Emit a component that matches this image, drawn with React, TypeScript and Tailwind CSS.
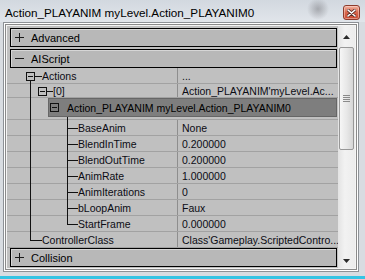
import React from "react";

const font = "font-['Liberation_Sans',Arial,sans-serif]";

function Expander({ open }: { open: boolean }) {
  return (
    <svg width="9" height="9" viewBox="0 0 9 9" shapeRendering="crispEdges" className="shrink-0">
      <line x1="0" y1="4.5" x2="9" y2="4.5" stroke="#1a1a1a" />
      {!open && <line x1="4.5" y1="0" x2="4.5" y2="9" stroke="#1a1a1a" />}
    </svg>
  );
}

function CategoryHeader({ label, open }: { label: string; open: boolean }) {
  return (
    <div className="ml-[3px] mr-[1px] flex h-[19px] shrink-0 items-center border border-black bg-[#b8b8b8] pl-[4px] shadow-[inset_1px_1px_0_#d6d6d6]">
      <Expander open={open} />
      <span className="ml-[7px] pt-[1px] text-[11px] leading-none text-black">{label}</span>
    </div>
  );
}

type Row = { name: string; value: string; indent: number; height: number };

const rows: Row[] = [
  { name: "Actions", value: "...", indent: 35, height: 16 },
  { name: "[0]", value: "Action_PLAYANIM'myLevel.Ac...", indent: 46, height: 14 },
];

const children: Row[] = [
  { name: "BaseAnim", value: "None", indent: 71, height: 16 },
  { name: "BlendInTime", value: "0.200000", indent: 71, height: 16 },
  { name: "BlendOutTime", value: "0.200000", indent: 71, height: 16 },
  { name: "AnimRate", value: "1.000000", indent: 71, height: 16 },
  { name: "AnimIterations", value: "0", indent: 71, height: 16 },
  { name: "bLoopAnim", value: "Faux", indent: 71, height: 16 },
  { name: "StartFrame", value: "0.000000", indent: 71, height: 16 },
  { name: "ControllerClass", value: "Class'Gameplay.ScriptedContro...", indent: 35, height: 16 },
];

function PropRow({ row }: { row: Row }) {
  return (
    <div
      className={`flex border-b border-[#a2a2a2] text-[10.5px] text-[#0c0c14] ${row.height === 14 ? "h-[14px] leading-[15px]" : "h-[16px] leading-[17px]"}`}
    >
      <div className="w-[171px] shrink-0 overflow-hidden whitespace-nowrap border-r border-[#8e8e8e]" style={{ paddingLeft: row.indent }}>
        {row.name}
      </div>
      <div className="flex-1 overflow-hidden whitespace-nowrap pl-[4px]">{row.value}</div>
    </div>
  );
}

function TreeLines() {
  const childYs = [60, 76, 92, 108, 124, 140, 156];
  return (
    <svg
      width="331"
      height="180"
      viewBox="0 0 331 180"
      shapeRendering="crispEdges"
      className="pointer-events-none absolute left-0 top-0"
    >
      {/* Actions */}
      <rect x="19.5" y="4.5" width="8" height="8" fill="none" stroke="#111" />
      <line x1="21" y1="8.5" x2="26" y2="8.5" stroke="#111" />
      <line x1="28" y1="8.5" x2="35" y2="8.5" stroke="#111" />
      <line x1="23.5" y1="13" x2="23.5" y2="172.5" stroke="#111" />
      <line x1="23" y1="172.5" x2="35" y2="172.5" stroke="#111" />
      {/* [0] */}
      <rect x="31.5" y="19.5" width="8" height="8" fill="none" stroke="#111" />
      <line x1="33" y1="23.5" x2="38" y2="23.5" stroke="#111" />
      <line x1="40" y1="23.5" x2="46" y2="23.5" stroke="#111" />
      {/* Action_PLAYANIM object */}
      <rect x="43.5" y="35.5" width="8" height="8" fill="none" stroke="#111" />
      <line x1="45" y1="39.5" x2="50" y2="39.5" stroke="#111" />
      <line x1="60.5" y1="49" x2="60.5" y2="156.5" stroke="#111" />
      {childYs.map((y) => (
        <line key={y} x1="60" y1={y + 0.5} x2="71" y2={y + 0.5} stroke="#111" />
      ))}
    </svg>
  );
}

function ScrollArrow({ up }: { up: boolean }) {
  return (
    <div className="flex h-[19px] items-center justify-center">
      <svg width="7" height="4" viewBox="0 0 7 4" className={up ? "mt-[2px]" : "mt-[4px]"}>
        <polygon points={up ? "3.5,0 7,4 0,4" : "0,0 7,0 3.5,4"} fill="#2a2a2a" />
      </svg>
    </div>
  );
}

export default function App() {
  return (
    <div className={`h-[279px] w-[365px] overflow-hidden bg-[#34c4e4] ${font}`}>
      <div className="flex h-[276px] flex-col bg-[#d8dce1]">
        {/* title bar */}
        <div className="flex h-[22px] shrink-0 items-start bg-[radial-gradient(circle_at_318px_9px,rgba(105,105,110,0.45)_0,rgba(105,105,110,0)_11px),linear-gradient(#d2d8df,#e1e5ea)] pl-[5px] pr-[5px]">
          <span className="flex-1 whitespace-nowrap pt-[5px] text-[11.7px] leading-[15px] text-black">
            Action_PLAYANIM myLevel.Action_PLAYANIM0
          </span>
          <div className="mt-[5px] flex h-[15px] w-[17px] items-center justify-center rounded-[3px] border border-[#8c3b2c] bg-[linear-gradient(#f2b4a2,#d8664c_50%,#c9472f)] shadow-[inset_0_0_0_1px_rgba(255,220,210,0.5)]">
            <svg width="9" height="8" viewBox="0 0 9 8">
              <path d="M1 1 L8 7 M8 1 L1 7" stroke="#5a2a22" strokeWidth="3" strokeLinecap="round" />
              <path d="M1 1 L8 7 M8 1 L1 7" stroke="#ffffff" strokeWidth="1.6" strokeLinecap="round" />
            </svg>
          </div>
        </div>

        {/* client area */}
        <div className="flex flex-1 pb-[4px] pl-[3px] pr-[6px]">
          <div className="flex flex-1 p-[4px] shadow-[inset_0_0_0_1px_#8d9196,inset_0_0_0_2px_#ffffff,inset_0_0_0_3px_#8a8a8a,inset_0_0_0_4px_#f4f4f4]">
            {/* property grid */}
            <div className="flex w-[331px] flex-col bg-[#c0c0c0]">
              <div className="h-[2px] shrink-0" />
              <CategoryHeader label="Advanced" open={false} />
              <div className="h-[2px] shrink-0" />
              <CategoryHeader label="AIScript" open={true} />

              <div className="relative h-[180px] shrink-0">
                {rows.map((r) => (
                  <PropRow key={r.name} row={r} />
                ))}
                <div className="h-[22px] border-b border-[#a2a2a2]">
                  <div className="ml-[41px] mr-[1px] flex h-[19px] items-center border border-[#666] bg-[#7e7e7e] pl-[18px] pt-[1px] text-[10.5px] leading-none text-black">
                    Action_PLAYANIM myLevel.Action_PLAYANIM0
                  </div>
                </div>
                {children.map((r) => (
                  <PropRow key={r.name} row={r} />
                ))}
                <TreeLines />
              </div>

              <CategoryHeader label="Collision" open={false} />
            </div>

            {/* scrollbar */}
            <div className="flex w-[17px] flex-col bg-[linear-gradient(90deg,#e3e3e3,#f2f2f2_40%,#ececec)]">
              <ScrollArrow up={true} />
              <div className="mx-[1px] mt-[2px] flex h-[103px] items-center justify-center rounded-[2px] border border-[#979797] bg-[linear-gradient(90deg,#f6f6f6,#e8e8e8_50%,#d6d6d6)]">
                <div className="flex flex-col gap-[1px]">
                  <div className="h-px w-[7px] bg-[#8a8a8a]" />
                  <div className="h-px w-[7px] bg-[#8a8a8a]" />
                  <div className="h-px w-[7px] bg-[#8a8a8a]" />
                  <div className="h-px w-[7px] bg-[#8a8a8a]" />
                </div>
              </div>
              <div className="flex-1" />
              <ScrollArrow up={false} />
            </div>
          </div>
        </div>
      </div>
    </div>
  );
}
